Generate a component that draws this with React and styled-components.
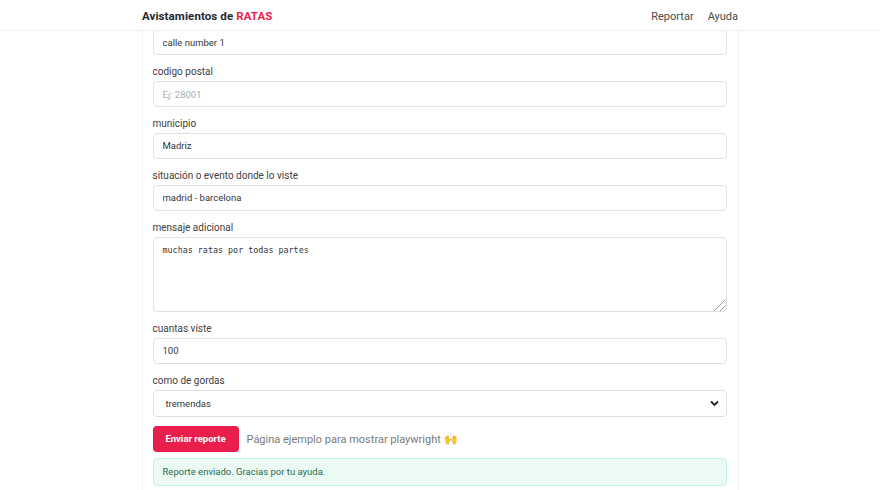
import React from "react";
import styled, { createGlobalStyle } from "styled-components";

const Sans = `Roboto, "Noto Sans", sans-serif`;

const Global = createGlobalStyle`
  html, body { margin: 0; padding: 0; height: 490px; overflow: hidden; background: #fff; }
  * { box-sizing: border-box; }
  body { font-family: ${Sans}; color: #363636; }
`;

const Page = styled.div`
  height: 490px;
  display: flex;
  flex-direction: column;
  overflow: hidden;
`;

const Header = styled.header`
  flex: none;
  height: 31px;
  padding-top: 1px;
  background: #fff;
  border-bottom: 1px solid #f0f0f2;
  position: relative;
  z-index: 2;
  display: flex;
  justify-content: center;
`;

const HeaderInner = styled.div`
  width: 596px;
  display: flex;
  align-items: center;
  justify-content: space-between;
`;

const Brand = styled.div`
  font-size: 11.5px;
  font-weight: 700;
  letter-spacing: 0.1px;
  color: #1f2430;
`;

const Accent = styled.span`
  color: #e91e4d;
`;

const Nav = styled.nav`
  display: flex;
  gap: 14px;
  padding-top: 1px;
`;

const NavLink = styled.a`
  font-size: 11px;
  color: #4a4a4a;
`;

const Content = styled.main`
  width: 597px;
  margin: 0 auto;
  padding: 0 11px 0 10px;
  border-left: 1px solid #f3f3f5;
  border-right: 1px solid #f3f3f5;
  flex: 1;
  overflow: hidden;
`;

const Form = styled.form`
  display: flex;
  flex-direction: column;
  margin-top: -1.4px;
`;

const Field = styled.div`
  display: flex;
  flex-direction: column;
  margin-bottom: 9.3px;
`;

const Label = styled.label`
  font-size: 10px;
  line-height: 15px;
  color: #414141;
  margin-bottom: 2px;
`;

const Input = styled.input`
  width: 100%;
  height: 25.5px;
  padding: 0 9px;
  border: 1px solid #dfe0e6;
  border-radius: 4px;
  font: 9.5px ${Sans};
  color: #363636;
  background: #fff;
  outline: none;
  &::placeholder { color: #a9acb3; opacity: 1; }
`;

const TextareaWrap = styled.div`
  position: relative;
  height: 75px;
`;

const Textarea = styled.textarea`
  display: block;
  width: 100%;
  height: 100%;
  padding: 6px 9px;
  border: 1px solid #dfe0e6;
  border-radius: 4px;
  font: 8.4px/13px "DejaVu Sans Mono", monospace;
  color: #363636;
  background: #fff;
  outline: none;
  resize: none;
`;

const Grip = styled.svg`
  position: absolute;
  right: 0;
  bottom: 0;
  width: 14px;
  height: 14px;
`;

const SelectWrap = styled.div`
  position: relative;
  height: 27px;
`;

const Select = styled.select`
  width: 100%;
  height: 100%;
  appearance: none;
  padding: 0 12px;
  border: 1px solid #dfe0e6;
  border-radius: 4px;
  font: 9.5px ${Sans};
  color: #363636;
  background: #fff;
  outline: none;
`;

const Chevron = styled.svg`
  position: absolute;
  right: 8px;
  top: 10px;
  width: 9px;
  height: 7px;
`;

const Actions = styled.div`
  display: flex;
  align-items: center;
  gap: 8px;
`;

const Button = styled.button`
  width: 86px;
  height: 25.5px;
  background: #e91e4d;
  color: #fff;
  border: none;
  border-radius: 4px;
  font: 700 9.5px ${Sans};
  padding: 0;
`;

const Note = styled.span`
  font-size: 11px;
  color: #7a7a7a;
  padding-top: 1px;
`;

const Alert = styled.div`
  margin-top: 6.4px;
  height: 27.6px;
  display: flex;
  align-items: center;
  padding: 0 9px;
  background: #ebfbf4;
  border: 1px solid #c0f2dc;
  border-radius: 4px;
  font-size: 9.5px;
  color: #2a6a50;
`;

const Row = ({ label, ...rest }) => (
  <Field>
    <Label>{label}</Label>
    <Input {...rest} />
  </Field>
);

export default function App() {
  return (
    <Page>
      <Global />
      <Header>
        <HeaderInner>
          <Brand>Avistamientos de <Accent>RATAS</Accent></Brand>
          <Nav>
            <NavLink>Reportar</NavLink>
            <NavLink>Ayuda</NavLink>
          </Nav>
        </HeaderInner>
      </Header>
      <Content>
        <Form>
          <Field><Input defaultValue="calle number 1" /></Field>
          <Row label="codigo postal" placeholder="Ej: 28001" />
          <Row label="municipio" defaultValue="Madriz" />
          <Row label="situación o evento donde lo viste" defaultValue="madrid - barcelona" />
          <Field>
            <Label>mensaje adicional</Label>
            <TextareaWrap>
              <Textarea defaultValue="muchas ratas por todas partes" />
              <Grip viewBox="0 0 14 14">
                <path d="M1 13 L12.5 1.5 M7 13 L12.5 7.5" fill="none" stroke="#9a9a9a" strokeWidth="1" />
              </Grip>
            </TextareaWrap>
          </Field>
          <Row label="cuantas viste" defaultValue="100" />
          <Field>
            <Label>como de gordas</Label>
            <SelectWrap>
              <Select defaultValue="tremendas"><option>tremendas</option></Select>
              <Chevron viewBox="0 0 9 7"><path d="M1 1.5 L4.5 5 L8 1.5" fill="none" stroke="#1f2430" strokeWidth="1.8" /></Chevron>
            </SelectWrap>
          </Field>
          <Actions>
            <Button type="button">Enviar reporte</Button>
            <Note>Página ejemplo para mostrar playwright 🙌</Note>
          </Actions>
          <Alert>Reporte enviado. Gracias por tu ayuda.</Alert>
        </Form>
      </Content>
    </Page>
  );
}
